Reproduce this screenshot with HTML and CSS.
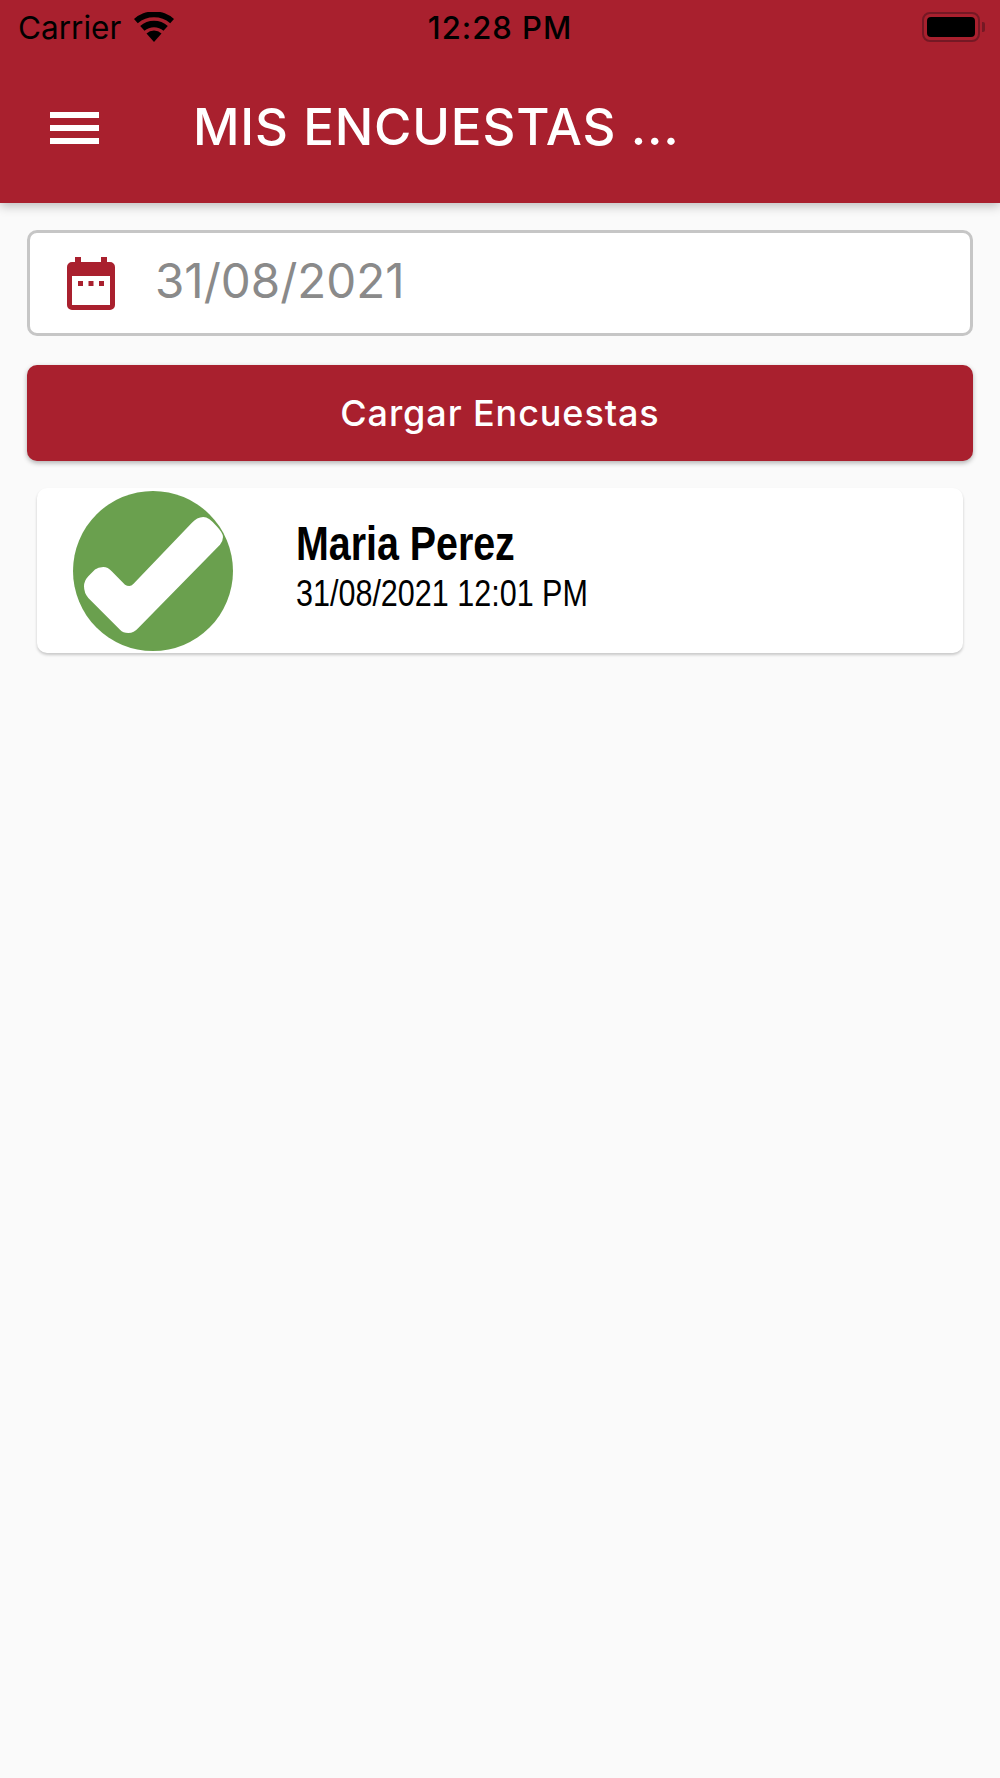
FILE: index.html
```html
<!DOCTYPE html>
<html lang="en">
<head>
  <meta charset="UTF-8">
  <meta name="viewport" content="width=device-width, initial-scale=1.0">
  <title>Mis Encuestas</title>
  <link rel="stylesheet" href="styles.css">
</head>
<body>
  <header class="appbar">
    <div class="status">
      <div class="status-left">
        <span>Carrier</span>
        <svg class="wifi" viewBox="0 0 40 30" width="40" height="30">
          <path d="M20 30 L12.500 21.500 A11 11 0 0 1 27.500 21.500 Z" fill="#000"/>
          <path d="M10.500 18.800 L6.200 14 A20.500 20.500 0 0 1 33.800 14 L29.500 18.800 A14.500 14.500 0 0 0 10.500 18.800 Z" fill="#000"/>
          <path d="M3.800 11.200 L0 7 A30 30 0 0 1 40 7 L36.200 11.200 A25 25 0 0 0 3.800 11.200 Z" fill="#000"/>
        </svg>
      </div>
      <div class="status-time">12:28 PM</div>
      <div class="status-right">
        <div class="battery"><div class="battery-level"></div></div>
        <div class="battery-nub"></div>
      </div>
    </div>
    <div class="toolbar">
      <div class="menu-icon"><span></span><span></span><span></span></div>
      <h1 class="title">MIS ENCUESTAS ...</h1>
    </div>
  </header>

  <main class="content">
    <div class="date-field">
      <svg class="calendar" viewBox="0 0 48 53" width="48" height="53">
        <path fill="#a9202e" fill-rule="evenodd" d="M8 0h6v5h20V0h6v5h3a5 5 0 0 1 5 5v38a5 5 0 0 1-5 5H5a5 5 0 0 1-5-5V10a5 5 0 0 1 5-5h3zM5 19v29h38V19z"/>
        <rect x="11" y="24" width="5" height="5" fill="#a9202e"/>
        <rect x="21.500" y="24" width="5" height="5" fill="#a9202e"/>
        <rect x="32" y="24" width="5" height="5" fill="#a9202e"/>
      </svg>
      <span class="date-value">31/08/2021</span>
    </div>

    <button class="load-btn">Cargar Encuestas</button>

    <div class="survey-card">
      <svg class="status-icon" viewBox="0 0 160 160" width="160" height="160">
        <circle cx="80" cy="80" r="80" fill="#6aa04e"/>
        <path fill="#fff" d="M56.300 95 Q58.500 95 60.300 93 L118.700 32 Q124 26 130.300 26 Q136 26 143.700 35.300 Q150 42 150 46 Q150 50 147 53.700 L65.300 137 Q61 142 55.300 142 Q50 142 47 138.700 L15.300 107 Q11 102 11 95.300 Q11 90 15.300 85.300 L22 78.500 Q25 76 30.300 76 Q35 76 38.700 80.300 L52 93.700 Q54 95 56.300 95 Z"/>
      </svg>
      <div class="survey-info">
        <div class="survey-name">Maria Perez</div>
        <div class="survey-date">31/08/2021 12:01 PM</div>
      </div>
    </div>
  </main>
</body>
</html>
```

FILE: styles.css
```css
html, body {
  margin: 0;
  padding: 0;
}
body {
  width: 1000px;
  height: 1778px;
  overflow: hidden;
  background-color: #fafafa;
  font-family: Inter, "Liberation Sans", sans-serif;
}
.appbar {
  height: 203px;
  background-color: #a9202e;
  box-shadow: 0 3px 10px rgba(0, 0, 0, 0.25);
}
.status {
  display: grid;
  grid-template-columns: 1fr auto 1fr;
  align-items: center;
  height: 54px;
  padding: 0 15px 0 18px;
  font-size: 31.500px;
  color: #000;
}
.status-left {
  display: flex;
  align-items: center;
  gap: 13px;
}
.status-time {
  margin-right: 3px;
  font-size: 31px;
  font-weight: 550;
  letter-spacing: 1px;
}
.status-right {
  display: flex;
  align-items: center;
  justify-content: flex-end;
  gap: 2px;
}
.battery {
  box-sizing: border-box;
  width: 58px;
  height: 30px;
  padding: 3px;
  border: 2px solid #751824;
  border-radius: 8px;
}
.battery-level {
  height: 100%;
  background-color: #000;
  border-radius: 4px;
}
.battery-nub {
  width: 3px;
  height: 10px;
  background-color: #751824;
  border-radius: 0 2px 2px 0;
}
.toolbar {
  display: flex;
  align-items: center;
  height: 149px;
  padding-left: 50px;
}
.menu-icon {
  display: flex;
  flex-direction: column;
  gap: 7px;
  width: 49px;
  margin-bottom: 2px;
}
.menu-icon span {
  height: 6px;
  background-color: #fff;
}
.title {
  margin: 0 0 4px 94px;
  font-size: 51px;
  font-weight: 500;
  letter-spacing: 0.8px;
  color: #fff;
}
.content {
  display: flex;
  flex-direction: column;
  padding: 27px 27px 0;
}
.date-field {
  box-sizing: border-box;
  display: flex;
  align-items: center;
  gap: 40px;
  height: 106px;
  padding: 0 0 0 37px;
  background-color: #fff;
  border: 3px solid #c6c6c6;
  border-radius: 10px;
}
.date-value {
  margin-bottom: 6px;
  font-size: 47.500px;
  color: #8a8a8a;
}
.load-btn {
  height: 96px;
  margin-top: 29px;
  background-color: #a9202e;
  color: #fff;
  font-family: inherit;
  font-size: 36px;
  font-weight: 500;
  letter-spacing: 0.9px;
  border: none;
  border-radius: 10px;
  box-shadow: 0 2px 5px rgba(0, 0, 0, 0.3);
}
.survey-card {
  display: flex;
  align-items: center;
  height: 165px;
  margin: 27px 10px 0;
  padding-left: 36px;
  background-color: #fff;
  border-radius: 10px;
  box-shadow: 0 2px 3px rgba(0, 0, 0, 0.2);
}
.survey-info {
  margin-left: 63px;
  margin-bottom: 7px;
  color: #000;
  font-family: "Liberation Sans", sans-serif;
}
/* no narrow face installed, so squeeze the regular one */
.survey-name {
  font-size: 48px;
  font-weight: 700;
  line-height: 53px;
  transform: scaleX(0.82);
  transform-origin: left;
}
.survey-date {
  font-size: 37px;
  line-height: 47px;
  transform: scaleX(0.825);
  transform-origin: left;
}
```
